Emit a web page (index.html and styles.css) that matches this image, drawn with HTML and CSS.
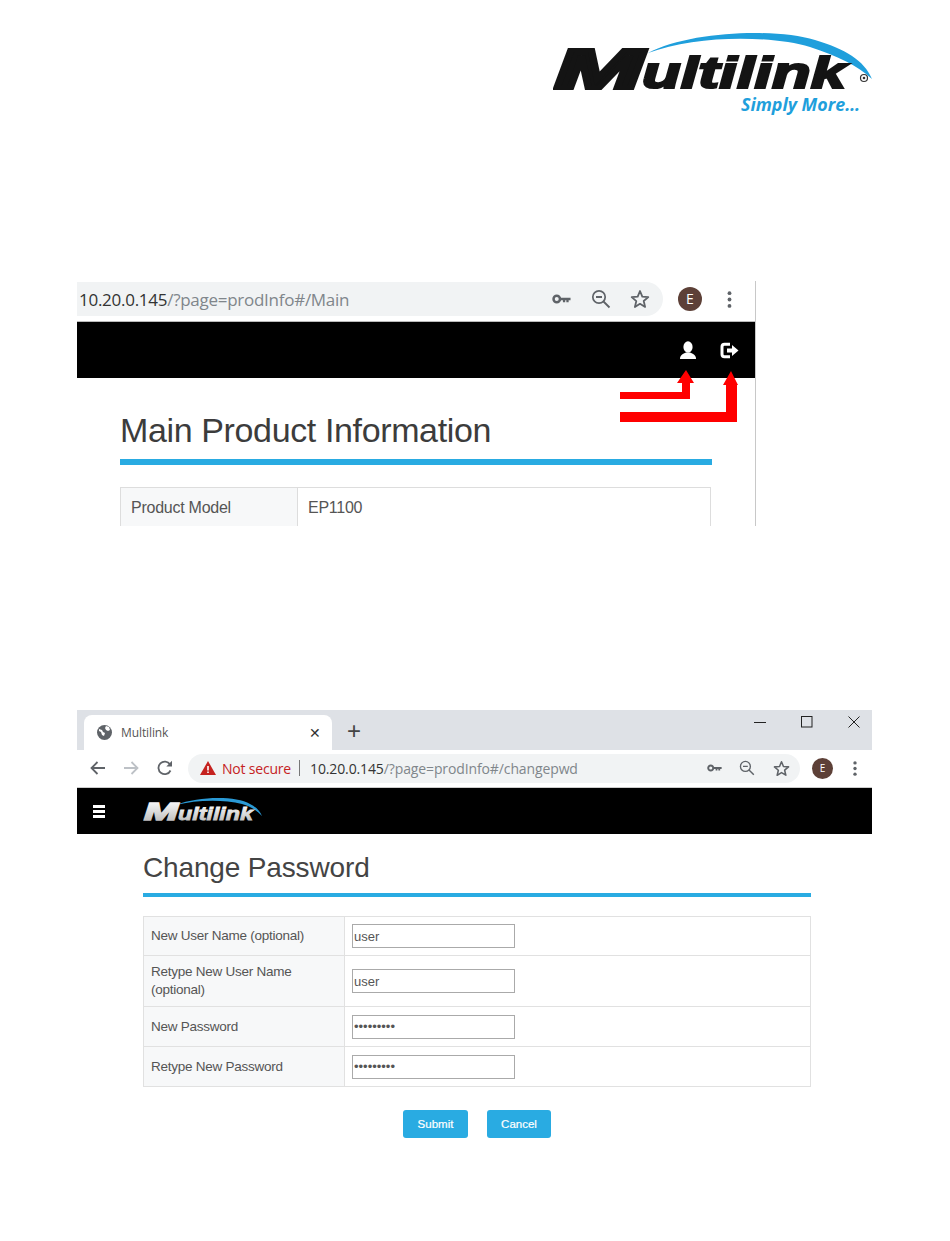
FILE: index.html
```html
<!DOCTYPE html>
<html lang="en">
<head>
    <meta charset="UTF-8">
    <meta name="viewport" content="width=device-width, initial-scale=1.0">
    <title>Multilink - Change Password</title>
    <link rel="stylesheet" href="styles.css">
</head>
<body>
    <!-- Shared browser icons -->
    <svg class="icon-defs" width="0" height="0" aria-hidden="true">
        <symbol id="icon-key" viewBox="0 0 20 12">
            <circle cx="5" cy="6" r="3.4" fill="none" stroke="currentColor" stroke-width="2.6"/>
            <path d="M8 4.6h11.5v2.8h-2v2h-2.4v-2h-1.2v2H11.5v-2H8z" fill="currentColor"/>
        </symbol>
        <symbol id="icon-zoom" viewBox="0 0 20 20">
            <circle cx="8" cy="8" r="6.2" fill="none" stroke="currentColor" stroke-width="1.7"/>
            <path d="M5 8h6M12.5 12.5l6 6" fill="none" stroke="currentColor" stroke-width="1.8"/>
        </symbol>
        <symbol id="icon-star" viewBox="0 0 20 20">
            <path d="M10 2l2.3 5.6 6 .5-4.6 3.9 1.4 5.9L10 14.8 4.9 18l1.4-5.9L1.7 8.100l6-.5z" fill="none" stroke="currentColor" stroke-width="1.8" stroke-linejoin="round"/>
        </symbol>
        <symbol id="icon-kebab" viewBox="0 0 4 16">
            <circle cx="2" cy="2" r="1.8" fill="currentColor"/>
            <circle cx="2" cy="8" r="1.8" fill="currentColor"/>
            <circle cx="2" cy="14" r="1.8" fill="currentColor"/>
        </symbol>
    </svg>

    <!-- Company logo -->
    <div class="logo-row">
        <svg class="logo" width="320" height="88" viewBox="553 30 320 88" role="img" aria-label="Multilink">
            <path d="M648 53C690 31 775 28 815 40C845 49 864 60 872 79C858 66 838 56 810 47C770 35 695 35 648 53Z" fill="#1f9fdc"/>
            <text x="555" y="88" class="logo-m" textLength="88" lengthAdjust="spacingAndGlyphs">M</text>
            <text x="642" y="88" class="logo-rest" textLength="204" lengthAdjust="spacingAndGlyphs">ultilink</text>
            <circle cx="864" cy="78" r="3.500" fill="none" stroke="#333" stroke-width="1.200"/>
            <circle cx="864" cy="78" r="1.300" fill="#333"/>
            <text x="741" y="111" class="logo-tag" textLength="119" lengthAdjust="spacingAndGlyphs">Simply More…</text>
        </svg>
    </div>

    <!-- First screenshot: account and logout icons -->
    <div class="shot shot-main">
        <div class="top-strip">
            <div class="url-bar">
                <span class="url-text"><span class="url-host">10.20.0.145</span>/?page=prodInfo#/Main</span>
                <svg class="key-icon" width="19" height="12"><use href="#icon-key"/></svg>
                <svg class="zoom-icon" width="20" height="20"><use href="#icon-zoom"/></svg>
                <svg class="star-icon" width="20" height="20"><use href="#icon-star"/></svg>
            </div>
            <div class="avatar">E</div>
            <svg class="kebab-icon" width="5" height="17"><use href="#icon-kebab"/></svg>
        </div>
        <div class="black-bar main-bar">
            <svg width="18" height="19" viewBox="0 0 18 19">
                <ellipse cx="9" cy="6" rx="4.600" ry="5.800" fill="#fff"/>
                <path d="M1 18c0-4 3-5.500 6-6.500h4c3 1 6 2.500 6 6.500z" fill="#fff"/>
            </svg>
            <svg width="19" height="17" viewBox="0 0 19 17">
                <path d="M10 2.200H4.500A2.500 2.500 0 0 0 2 4.700v7.600a2.500 2.500 0 0 0 2.500 2.500H10" fill="none" stroke="#fff" stroke-width="3"/>
                <path d="M7 6.500h5V3l6.500 5.500L12 14v-3.500H7z" fill="#fff"/>
            </svg>
        </div>
        <div class="main-content">
            <h1 class="main-title">Main Product Information</h1>
            <table class="info-table">
                <tr>
                    <td class="label-cell">Product Model</td>
                    <td>EP1100</td>
                </tr>
            </table>
        </div>
        <!-- Red arrows drawn over the screenshot -->
        <svg class="arrows" width="679" height="245" viewBox="77 281 679 245">
            <path d="M620 392H682V383H677L686 370L694 383H690V399H620Z" fill="#f00"/>
            <path d="M620 412H726V385H723L731 371L738 385H737V422H620Z" fill="#f00"/>
        </svg>
    </div>

    <!-- Second screenshot: change password form -->
    <div class="shot shot-form">
        <div class="tab-strip">
            <div class="tab">
                <svg width="15" height="15" viewBox="0 0 15 15">
                    <circle cx="7.500" cy="7.500" r="7.500" fill="#5f6368"/>
                    <path d="M2 4l3 1 1 2 2 1-1 3-2-1-1-3-2-1zM9 1l3 1 1 3-2 1-2-1-1-2z" fill="#fff"/>
                </svg>
                <span class="tab-title">Multilink</span>
                <span class="tab-close">✕</span>
            </div>
            <span class="tab-new">+</span>
            <div class="window-btns">
                <svg width="12" height="12" viewBox="0 0 12 12"><path d="M0 6.500h12" stroke="#222" stroke-width="1"/></svg>
                <svg width="12" height="12" viewBox="0 0 12 12"><rect x="0.500" y="0.500" width="10.500" height="10.500" fill="none" stroke="#222"/></svg>
                <svg width="12" height="12" viewBox="0 0 12 12"><path d="M0.500 0.500l11 11M11.500 0.500l-11 11" stroke="#222" stroke-width="1"/></svg>
            </div>
        </div>
        <div class="toolbar">
            <svg class="nav-back" width="16" height="14" viewBox="0 0 16 14"><path d="M15 7H2M7.500 1L1.500 7l6 6" fill="none" stroke="#5f6368" stroke-width="1.800"/></svg>
            <svg class="nav-forward" width="16" height="14" viewBox="0 0 16 14"><path d="M1 7h13M8.500 1l6 6-6 6" fill="none" stroke="#bdc1c6" stroke-width="1.800"/></svg>
            <svg class="nav-reload" width="16" height="16" viewBox="0 0 16 16"><path d="M13.500 10.500A6.300 6.300 0 1 1 13 4.300" fill="none" stroke="#5f6368" stroke-width="1.800"/><path d="M15 0.800V6.500H9.300z" fill="#5f6368"/></svg>
            <div class="url-bar small">
                <svg class="warn-icon" width="16" height="14" viewBox="0 0 16 14"><path d="M8 0l8 14H0z" fill="#c5221f"/><path d="M7.200 5h1.600v4.500H7.200zM7.200 10.500h1.600V12H7.200z" fill="#fff"/></svg>
                <span class="not-secure">Not secure</span>
                <span class="url-divider"></span>
                <span class="url-text"><span class="url-host">10.20.0.145</span>/?page=prodInfo#/changepwd</span>
                <svg class="key-icon" width="15" height="10"><use href="#icon-key"/></svg>
                <svg class="zoom-icon" width="16" height="16"><use href="#icon-zoom"/></svg>
                <svg class="star-icon" width="17" height="17"><use href="#icon-star"/></svg>
            </div>
            <div class="avatar">E</div>
            <svg class="kebab-icon" width="4" height="15"><use href="#icon-kebab"/></svg>
        </div>
        <div class="black-bar form-bar">
            <div class="hamburger"><span></span><span></span><span></span></div>
            <svg class="small-logo" width="120" height="34" viewBox="143 794 120 34" role="img" aria-label="Multilink">
                <defs>
                    <linearGradient id="silver" x1="0" y1="0" x2="0" y2="1">
                        <stop offset="0" stop-color="#fff"/>
                        <stop offset="1" stop-color="#b5b5b5"/>
                    </linearGradient>
                </defs>
                <path d="M176 805C200 796 236 796 250 804C256 807 260 811 262 816C256 810 250 806 242 804C222 799 196 800 176 805Z" fill="#2a9ad6"/>
                <text x="144" y="820" class="small-m" fill="url(#silver)" stroke="url(#silver)" textLength="34" lengthAdjust="spacingAndGlyphs">M</text>
                <text x="178" y="820" class="small-rest" fill="url(#silver)" stroke="url(#silver)" textLength="75" lengthAdjust="spacingAndGlyphs">ultilink</text>
            </svg>
        </div>
        <div class="form-content">
            <h2 class="form-title">Change Password</h2>
            <table class="pwd-table">
                <tr class="row-first">
                    <td class="label-cell">New User Name (optional)</td>
                    <td><input type="text" value="user"></td>
                </tr>
                <tr class="row-tall">
                    <td class="label-cell">Retype New User Name (optional)</td>
                    <td><input type="text" value="user"></td>
                </tr>
                <tr class="row-normal">
                    <td class="label-cell">New Password</td>
                    <td><input type="password" value="passwords"></td>
                </tr>
                <tr class="row-normal">
                    <td class="label-cell">Retype New Password</td>
                    <td><input type="password" value="passwords"></td>
                </tr>
            </table>
            <div class="form-buttons">
                <button>Submit</button>
                <button class="cancel-btn">Cancel</button>
            </div>
        </div>
    </div>
</body>
</html>
```
FILE: styles.css
```css
/* Reset and base styles */
* {
    box-sizing: border-box;
    margin: 0;
    padding: 0;
}

body {
    font-family: "Liberation Sans", Arial, sans-serif;
    color: #444;
    background-color: #fff;
    width: 950px;
}

.icon-defs {
    position: absolute;
}

/* Company logo */
.logo-row {
    height: 281px;
    padding: 30px 77px 0 0;
    display: flex;
    justify-content: flex-end;
    align-items: flex-start;
}

.logo-m {
    font: italic bold 56px "Liberation Sans", sans-serif;
    fill: #141414;
    stroke: #141414;
    stroke-width: 4px;
}

.logo-rest {
    font: italic bold 45px "Liberation Sans", sans-serif;
    fill: #141414;
    stroke: #141414;
    stroke-width: 2.2px;
}

.logo-tag {
    font: italic bold 18px "Open Sans", sans-serif;
    fill: #1f9fdc;
}

/* Screenshots */
.shot {
    margin-left: 77px;
    position: relative;
    overflow: hidden;
}

.shot-main {
    width: 679px;
    height: 245px;
    border-right: 1px solid #c8c8c8;
}

.shot-form {
    width: 795px;
    margin-top: 184px;
}

.arrows {
    position: absolute;
    top: 0;
    left: 0;
}

/* Browser chrome */
.top-strip {
    height: 41px;
    padding-top: 1px;
    display: flex;
    align-items: flex-start;
    border-bottom: 1px solid #bbb;
}

.url-bar {
    display: flex;
    align-items: center;
    background-color: #f1f3f4;
    color: #5f6368;
}

.top-strip .url-bar {
    width: 586px;
    height: 34px;
    padding-left: 2px;
    border-radius: 0 17px 17px 0;
}

.url-text {
    font-family: "Open Sans", sans-serif;
    font-size: 17px;
    color: #80868b;
    letter-spacing: -0.27px;
    flex: 1;
    white-space: nowrap;
}

.url-host {
    color: #333;
}

.top-strip .key-icon {
    margin-right: 20px;
}

.top-strip .zoom-icon {
    margin-right: 19px;
}

.top-strip .star-icon {
    margin-right: 13px;
}

.avatar {
    border-radius: 50%;
    background-color: #5d4037;
    color: #fff;
    font-family: "Open Sans", sans-serif;
    text-align: center;
}

.top-strip .avatar {
    width: 24px;
    height: 24px;
    margin: 5px 0 0 15px;
    font-size: 14px;
    line-height: 24px;
}

.kebab-icon {
    color: #5f6368;
}

.top-strip .kebab-icon {
    margin: 9px 0 0 25px;
}

.black-bar {
    background-color: #000;
    display: flex;
    align-items: center;
}

.main-bar {
    height: 56px;
    justify-content: flex-end;
    gap: 23px;
    padding-right: 16px;
}

/* Main product page */
.main-content {
    padding: 32px 43px 0;
}

.main-title {
    font-size: 34px;
    font-weight: 400;
    letter-spacing: -0.37px;
    line-height: 41px;
    color: #3c3c3c;
    height: 55px;
    border-bottom: 6px solid #29abe2;
    width: 592px;
}

.info-table {
    margin-top: 22px;
    width: 591px;
    border-collapse: collapse;
    font-size: 16px;
    letter-spacing: -0.25px;
}

.info-table td {
    border: 1px solid #ddd;
    padding: 0 10px;
    height: 40px;
    color: #555;
}

.label-cell {
    background-color: #f7f8f9;
}

.info-table .label-cell {
    width: 177px;
}

/* Tab strip */
.tab-strip {
    height: 40px;
    background-color: #dee1e6;
    display: flex;
    align-items: flex-end;
    padding-left: 7px;
    position: relative;
}

.tab {
    width: 248px;
    height: 35px;
    background-color: #fff;
    border-radius: 8px 8px 0 0;
    display: flex;
    align-items: center;
    padding: 0 9px 0 13px;
    font-size: 12px;
}

.tab-title {
    flex: 1;
    margin-left: 9px;
    color: #555;
    font-family: "Open Sans", sans-serif;
    letter-spacing: -0.1px;
}

.tab-close {
    width: 14px;
    font-size: 14px;
    color: #333;
}

.tab-new {
    margin: 0 0 7px 15px;
    font-size: 24px;
    line-height: 24px;
    color: #444;
}

.window-btns {
    margin-left: auto;
    align-self: flex-start;
    display: flex;
    gap: 35px;
    padding: 6px 12px 0 0;
}

/* Toolbar */
.toolbar {
    height: 38px;
    display: flex;
    align-items: center;
    border-bottom: 1px solid #ccc;
    padding: 0 15px 1px 13px;
}

.nav-forward {
    margin-left: 17px;
}

.nav-reload {
    margin-left: 18px;
}

.toolbar .url-bar {
    width: 612px;
    height: 29px;
    margin-left: 15px;
    padding: 0 10px 0 12px;
    border-radius: 15px;
}

.warn-icon {
    flex: none;
}

.not-secure {
    margin-left: 6px;
    font-family: "Open Sans", sans-serif;
    font-size: 14px;
    letter-spacing: -0.2px;
    color: #c5221f;
    white-space: nowrap;
}

.url-divider {
    width: 1px;
    height: 16px;
    margin: 0 10px 0 8px;
    background-color: #777;
}

.toolbar .url-text {
    font-size: 14px;
    letter-spacing: -0.12px;
}

.toolbar .key-icon {
    margin-right: 17px;
}

.toolbar .zoom-icon {
    margin-right: 18px;
}

.toolbar .avatar {
    width: 21px;
    height: 21px;
    margin-left: 12px;
    font-size: 10px;
    line-height: 21px;
}

.toolbar .kebab-icon {
    margin-left: 20px;
}

/* Black header with small logo */
.form-bar {
    height: 46px;
    padding-left: 16px;
}

.hamburger {
    width: 12px;
    display: flex;
    flex-direction: column;
    gap: 2px;
}

.hamburger span {
    height: 3px;
    background-color: #fff;
}

.small-logo {
    margin-left: 38px;
}

.small-m {
    font: italic bold 23px "Liberation Sans", sans-serif;
    stroke-width: 1.5px;
}

.small-rest {
    font: italic bold 18px "Liberation Sans", sans-serif;
    stroke-width: 0.8px;
}

/* Change password form */
.form-content {
    padding: 18px 61px 0 66px;
}

.form-title {
    font-size: 28px;
    font-weight: 400;
    letter-spacing: -0.15px;
    line-height: 32px;
    color: #444;
    height: 45px;
    border-bottom: 4px solid #29abe2;
}

.pwd-table {
    margin-top: 19px;
    width: 668px;
    border-collapse: collapse;
    font-size: 13.5px;
    letter-spacing: -0.25px;
    color: #555;
}

.pwd-table td {
    border: 1px solid #e1e1e1;
    padding: 0 7px;
    line-height: 18px;
}

.pwd-table .label-cell {
    width: 201px;
}

.row-first {
    height: 39px;
}

.row-normal {
    height: 40px;
}

.row-tall {
    height: 51px;
}

input {
    width: 163px;
    height: 24px;
    display: block;
    border: 1px solid #aaa;
    padding: 0 1px;
    font-family: "Liberation Sans", sans-serif;
    font-size: 13px;
    color: #555;
}

.form-buttons {
    display: flex;
    justify-content: center;
    gap: 19px;
    margin: 23px 0 0;
}

button {
    width: 65px;
    height: 28px;
    background-color: #29abe2;
    color: #fff;
    border: none;
    border-radius: 3px;
    font-family: "Liberation Sans", sans-serif;
    font-size: 11.5px;
    -webkit-text-stroke: 0.2px #fff;
}

.cancel-btn {
    width: 64px;
}
```
